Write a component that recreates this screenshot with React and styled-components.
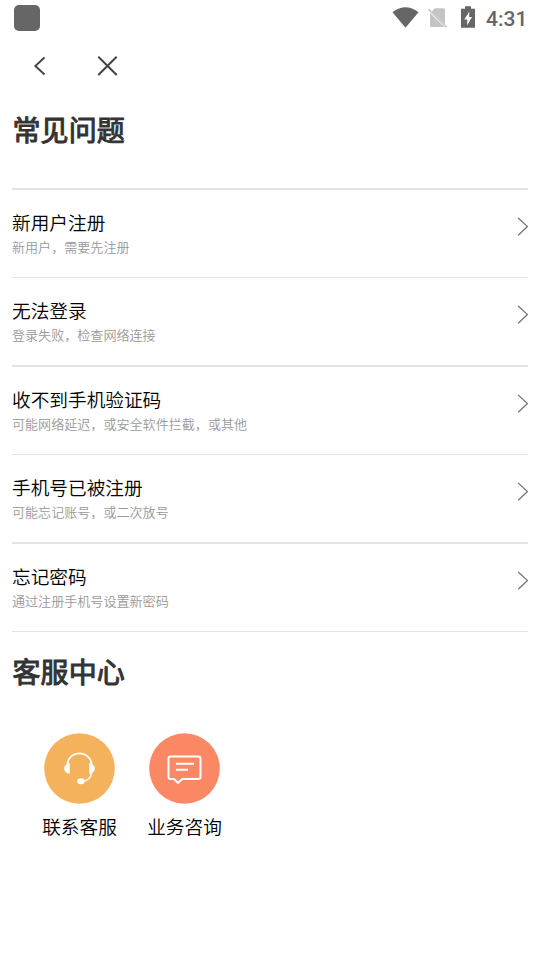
import React from "react";
import styled, { createGlobalStyle } from "styled-components";

const GlobalStyle = createGlobalStyle`
  * { box-sizing: border-box; }
  body { margin: 0; background: #fff; font-family: "Noto Sans CJK SC", sans-serif; }
  h1, h2, p { margin: 0; }
  svg { display: block; flex: none; }
`;

const Screen = styled.div`
  width: 540px;
  height: 960px;
  background: #fff;
  overflow: hidden;
`;

const StatusBar = styled.header`
  display: flex;
  align-items: center;
  height: 36px;
  padding: 0 13px 0 14px;
`;

const AppBadge = styled.span`
  width: 26px;
  height: 26px;
  border-radius: 5px;
  background: #666;
  margin-right: auto;
`;

const Clock = styled.time`
  width: 41px;
  margin-left: 10px;
  padding-top: 2px;
  color: #666;
  font: 500 21px/24px Roboto, sans-serif;
  white-space: nowrap;
`;

const NavBar = styled.nav`
  display: flex;
  align-items: center;
  height: 60px;
  padding-left: 30px;
  gap: 48px;
`;

const NavButton = styled.button`
  display: flex;
  padding: 0;
  border: 0;
  background: none;
`;

const Heading = styled.h1`
  height: ${(p) => p.$height}px;
  padding: ${(p) => p.$top}px 12.5px 0;
  color: #333;
  font-size: 28px;
  font-weight: 400;
  -webkit-text-stroke: 1px #333;
  letter-spacing: 0.1px;
  line-height: 40px;
`;

const FaqList = styled.section`
  margin: 0 12px;
  border-bottom: 1px solid #e4e4e4;
`;

const FaqRow = styled.article`
  display: flex;
  justify-content: space-between;
  height: ${(p) => p.$line + 87}px;
  padding-top: 18px;
  border-top: ${(p) => p.$line}px solid #e4e4e4;
`;

const Question = styled.h2`
  color: #000;
  font-size: 18.67px;
  font-weight: 350;
  line-height: 28px;
`;

const Hint = styled.p`
  padding-top: 1px;
  color: #999;
  font-size: 13.07px;
  font-weight: 350;
  line-height: 20px;
`;

const Services = styled.section`
  display: flex;
  padding: 0 27px;
`;

const Service = styled.div`
  display: flex;
  flex-direction: column;
  align-items: center;
  width: 105px;
  gap: 8px;
`;

const ServiceLabel = styled.span`
  font-size: 18.67px;
  font-weight: 350;
  line-height: 28px;
  color: #000;
`;

const questions = [
  ["新用户注册", "新用户，需要先注册"],
  ["无法登录", "登录失败，检查网络连接"],
  ["收不到手机验证码", "可能网络延迟，或安全软件拦截，或其他"],
  ["手机号已被注册", "可能忘记账号，或二次放号"],
  ["忘记密码", "通过注册手机号设置新密码"],
];

const StatusIcons = () => (
  <svg width="84" height="26" viewBox="392 5 84 26">
    <path d="M392.5 12.2Q405.5 2.5 418.5 12.2L405.5 27.7Z" fill="#666" />
    <path d="M435 8.3h8.500q1.500 0 1.500 1.500v14.500L431.500 11.500ZM430 13l14.300 14H431.500q-1.500 0-1.500-1.500Z" fill="#c4c4c4" />
    <path d="M428.5 9.3l18 18" stroke="#c4c4c4" strokeWidth="1.6" />
    <path d="M461 8.7h4V6.2h6v2.5h4v19h-14Z" fill="#666" />
    <path d="M469.5 11.5l-5.3 8h3v5.8l4.8-8.3h-3Z" fill="#fff" />
  </svg>
);

const Chevron = () => (
  <svg width="12" height="20" viewBox="0 0 12 20">
    <path d="M2.2 1L11.5 9.6L2.2 18.2" fill="none" stroke="#777" strokeWidth="1.3" />
  </svg>
);

const ChevronSlot = styled.span`
  padding-top: 9px;
`;

const SupportIcon = () => (
  <svg width="72" height="72" viewBox="0 0 72 72">
    <circle cx="35.5" cy="36.5" r="35.3" fill="#f4b25d" />
    <g fill="none" stroke="#fff" strokeLinecap="round">
      <path d="M23.500 31.500C25.500 18 45.500 18 47.500 31.500" strokeWidth="1.8" />
      <path d="M47.500 41C46.800 46 43.500 48.800 39 49" strokeWidth="1.5" />
    </g>
    <path d="M25.800 31.300v10.400C22 41.300 20.200 39 20.200 36.500s2-5 5.600-5.200ZM45.200 31.300v10.400C49 41.300 50.800 39 50.800 36.500s-2-5-5.600-5.200Z" fill="#fff" />
    <ellipse cx="37" cy="49.200" rx="3.800" ry="3" fill="#fff" />
  </svg>
);

const MessageIcon = () => (
  <svg width="72" height="72" viewBox="0 0 72 72">
    <circle cx="35.5" cy="36.5" r="35.3" fill="#fa8864" />
    <g fill="none" stroke="#fff" strokeWidth="2" strokeLinejoin="round">
      <path d="M21.500 24.500h28q2 0 2 2v18.500q0 2-2 2H33.300L29 51L25 47H21.500q-2 0-2-2V26.500q0-2 2-2Z" />
      <path d="M27 31.800h18M27 37.700h12" />
    </g>
  </svg>
);

export default function App() {
  return (
    <Screen>
      <GlobalStyle />
      <StatusBar>
        <AppBadge />
        <StatusIcons />
        <Clock>4:31</Clock>
      </StatusBar>
      <NavBar>
        <NavButton aria-label="返回">
          <svg width="18" height="22" viewBox="30 55 18 22">
            <path d="M44.500 57.500L35.300 66L44.500 74.500" fill="none" stroke="#444" strokeWidth="1.900" />
          </svg>
        </NavButton>
        <NavButton aria-label="关闭">
          <svg width="22" height="22" viewBox="96 55 22 22">
            <path d="M98.300 56.700L116.700 75M116.700 56.700L98.300 75" stroke="#444" strokeWidth="2" />
          </svg>
        </NavButton>
      </NavBar>
      <Heading $top={13} $height={92}>常见问题</Heading>
      <FaqList>
        {questions.map(([title, hint], i) => (
          <FaqRow key={title} $line={i % 2 ? 1 : 2}>
            <div>
              <Question>{title}</Question>
              <Hint>{hint}</Hint>
            </div>
            <ChevronSlot><Chevron /></ChevronSlot>
          </FaqRow>
        ))}
      </FaqList>
      <Heading as="h2" $top={19} $height={100}>客服中心</Heading>
      <Services>
        <Service>
          <SupportIcon />
          <ServiceLabel>联系客服</ServiceLabel>
        </Service>
        <Service>
          <MessageIcon />
          <ServiceLabel>业务咨询</ServiceLabel>
        </Service>
      </Services>
    </Screen>
  );
}
